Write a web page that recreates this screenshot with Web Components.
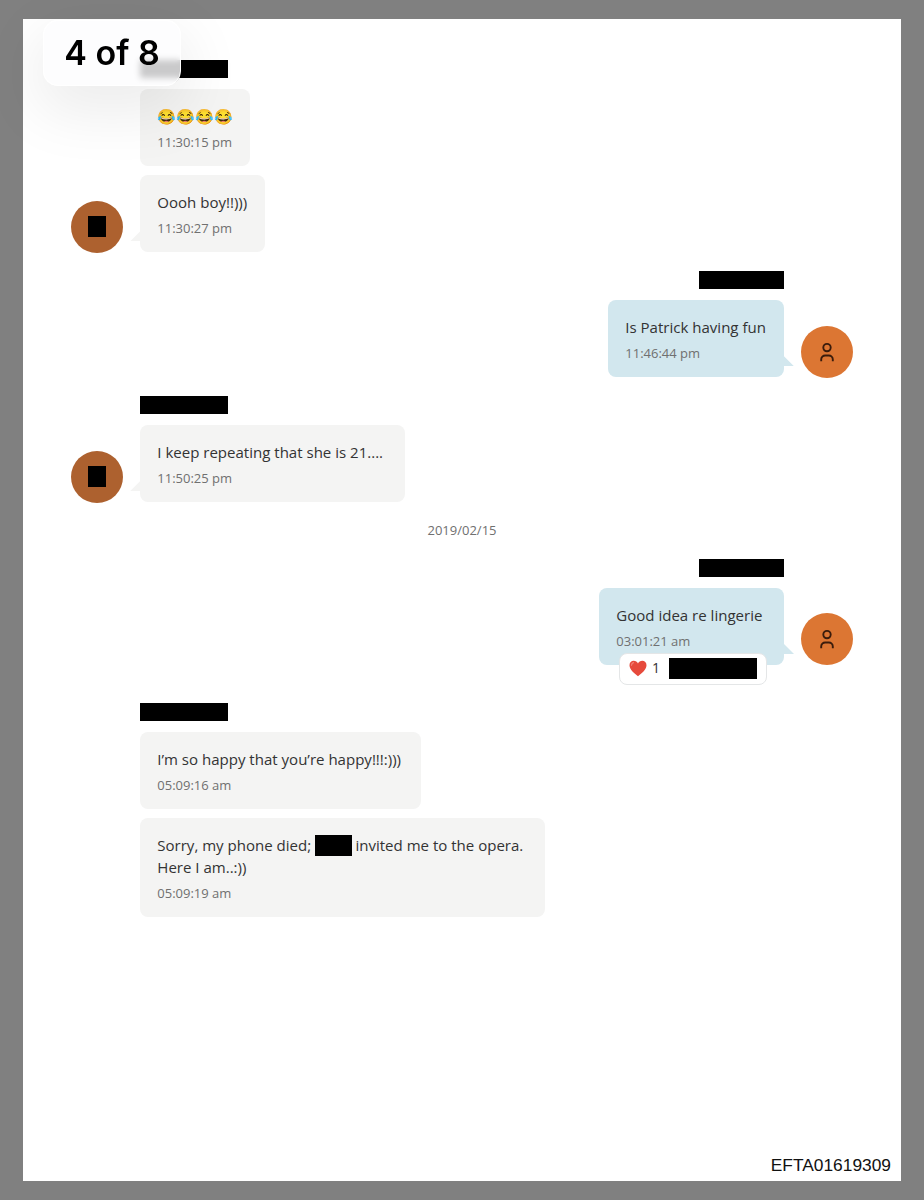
<!DOCTYPE html>
<html lang="en">
<head>
<meta charset="utf-8">
<title>Messages</title>
<style>
  body {
    margin: 0;
    background: #808080;
    font-family: "Open Sans", "Noto Sans", sans-serif;
  }
</style>
</head>
<body>
<document-page code="EFTA01619309">
  <page-counter slot="counter">4 of 8</page-counter>

  <message-group avatar="redacted">
    <redacted-box slot="name"></redacted-box>
    <chat-bubble time="11:30:15 pm" style="--width: 110px"><emoji-row>😂😂😂😂</emoji-row></chat-bubble>
    <chat-bubble time="11:30:27 pm" style="--width: 125px" tail>Oooh boy!!)))</chat-bubble>
  </message-group>

  <message-group side="right" avatar="person">
    <redacted-box slot="name" style="--w: 85px"></redacted-box>
    <chat-bubble side="right" time="11:46:44 pm" style="--width: 176px" tail>Is Patrick having fun</chat-bubble>
  </message-group>

  <message-group avatar="redacted">
    <redacted-box slot="name"></redacted-box>
    <chat-bubble time="11:50:25 pm" style="--width: 265px" tail>I keep repeating that she is 21....</chat-bubble>
  </message-group>

  <date-divider>2019/02/15</date-divider>

  <message-group side="right" avatar="person" style="margin-bottom: 38px">
    <redacted-box slot="name" style="--w: 85px"></redacted-box>
    <chat-bubble side="right" time="03:01:21 am" style="--width: 185px" tail>Good idea re lingerie
      <message-reaction slot="reaction" count="1"><redacted-box style="--w: 88px; --h: 21px"></redacted-box></message-reaction>
    </chat-bubble>
  </message-group>

  <message-group>
    <redacted-box slot="name"></redacted-box>
    <chat-bubble time="05:09:16 am" style="--width: 281px">I’m so happy that you’re happy!!!:)))</chat-bubble>
    <chat-bubble time="05:09:19 am" style="--width: 405px">Sorry, my phone died; <redacted-box style="--w: 36.5px; --h: 21px; vertical-align: -1px; margin: -4px 0"></redacted-box> invited me to the opera.<br>Here I am..:))</chat-bubble>
  </message-group>
</document-page>

<script>
const define = (name, html, setup) => {
  const template = document.createElement("template")
  template.innerHTML = html
  customElements.define(name, class extends HTMLElement {
    constructor() {
      super()
      this.attachShadow({ mode: "open" })
      this.shadowRoot.appendChild(template.content.cloneNode(true))
    }

    connectedCallback() {
      if (setup) setup(this, this.shadowRoot)
    }
  })
}

define("document-page", /* html */ `
  <style>
    :host {
      display: block;
      height: 1200px;
      padding: 19px 23px 19px;
      box-sizing: border-box;
      position: relative;
      overflow: hidden;
    }

    main {
      display: flex;
      flex-direction: column;
      height: 1162px;
      padding: 41px 48px 0;
      box-sizing: border-box;
      background: white;
    }

    footer {
      margin: auto -38px 6px 0;
      text-align: right;
      font: 17.35px/20px "Liberation Sans", Arial, sans-serif;
      color: #111;
    }
  </style>
  <main>
    <slot></slot>
    <footer></footer>
  </main>
  <slot name="counter"></slot>
`, (el, root) => {
  root.querySelector("footer").textContent = el.getAttribute("code")
})

define("page-counter", /* html */ `
  <style>
    :host {
      position: absolute;
      left: 43px;
      top: 20px;
      width: 138px;
      height: 66px;
      box-sizing: border-box;
      border: 1.5px solid #fff;
      border-radius: 15px;
      background: rgba(253, 253, 254, 0.8);
      backdrop-filter: blur(3px);
      box-shadow: 0 20px 60px 6px rgba(0, 0, 0, 0.08);
      display: flex;
      align-items: center;
      justify-content: center;
      font: 600 34px/1 Inter, sans-serif;
      color: #000;
    }
  </style>
  <span><slot></slot></span>
`)

define("redacted-box", /* html */ `
  <style>
    :host {
      display: inline-block;
      width: var(--w, 88px);
      height: var(--h, 18px);
      background: #000;
    }
  </style>
`)

define("emoji-row", /* html */ `
  <style>
    :host {
      display: block;
      height: 21.5px;
      font-size: 15px;
      white-space: nowrap;
    }
  </style>
  <slot></slot>
`)

define("user-avatar", /* html */ `
  <style>
    :host {
      display: flex;
      align-items: center;
      justify-content: center;
      width: 52px;
      height: 52px;
      border-radius: 50%;
      background: #ad612f;
    }

    :host([kind="person"]) {
      background: #dc7633;
    }

    svg {
      display: none;
      width: 16px;
      height: 20px;
      fill: none;
      stroke: #3a1c0c;
      stroke-width: 1.9;
    }

    :host([kind="person"]) svg {
      display: block;
    }

    :host([kind="person"]) redacted-box {
      display: none;
    }
  </style>
  <redacted-box style="--w: 18px; --h: 21px"></redacted-box>
  <svg viewBox="0 0 16 20">
    <circle cx="8" cy="5.6" r="3.7" />
    <path d="M2.2 19.2v-1.7a4 4 0 0 1 4-4h3.6a4 4 0 0 1 4 4v1.7" />
  </svg>
`)

define("message-group", /* html */ `
  <style>
    :host {
      display: grid;
      grid-template-columns: 52px auto;
      column-gap: 17px;
      justify-content: start;
      align-items: end;
      margin-bottom: 18.7px;
    }

    :host([side="right"]) {
      grid-template-columns: auto 52px;
      justify-content: end;
    }

    .body {
      display: flex;
      flex-direction: column;
      align-items: flex-start;
      gap: 9.1px;
      grid-row: 1;
      grid-column: 2;
    }

    :host([side="right"]) .body {
      grid-column: 1;
      align-items: flex-end;
    }

    .name {
      display: flex;
      margin-bottom: 1.9px;
    }

    user-avatar {
      grid-row: 1;
      grid-column: 1;
      margin-bottom: -0.4px;
    }

    :host([side="right"]) user-avatar {
      grid-column: 2;
    }

    :host(:not([avatar])) user-avatar {
      visibility: hidden;
    }
  </style>
  <user-avatar></user-avatar>
  <div class="body">
    <div class="name"><slot name="name"></slot></div>
    <slot></slot>
  </div>
`, (el, root) => {
  root.querySelector("user-avatar").setAttribute("kind", el.getAttribute("avatar") || "")
})

define("chat-bubble", /* html */ `
  <style>
    :host {
      --fill: #f4f4f3;
      display: block;
      position: relative;
      width: var(--width);
      padding: 17.1px 0 15.1px 17.3px;
      box-sizing: border-box;
      border-radius: 8px;
      background: var(--fill);
      color: #333;
    }

    :host([side="right"]) {
      --fill: #d2e7ee;
    }

    .text {
      font-size: 15.04px;
      line-height: 21.5px;
      white-space: nowrap;
    }

    time {
      display: block;
      margin-top: 5.3px;
      font-size: 13px;
      line-height: 18.2px;
      color: #707070;
    }

    .tail {
      display: none;
      position: absolute;
      left: -10px;
      bottom: 11px;
      width: 11px;
      height: 11px;
      background: var(--fill);
      clip-path: polygon(100% 0, 100% 100%, 0 100%);
    }

    :host([tail]) .tail {
      display: block;
    }

    :host([side="right"]) .tail {
      left: auto;
      right: -10px;
      clip-path: polygon(0 0, 100% 100%, 0 100%);
    }
  </style>
  <div class="text"><slot></slot></div>
  <time></time>
  <i class="tail"></i>
  <slot name="reaction"></slot>
`, (el, root) => {
  root.querySelector("time").textContent = el.getAttribute("time")
})

define("message-reaction", /* html */ `
  <style>
    :host {
      position: absolute;
      right: 17px;
      bottom: -19.5px;
      display: flex;
      align-items: center;
      width: 148px;
      height: 32px;
      padding: 0 9px 1px;
      box-sizing: border-box;
      border: 1px solid #e4e6e7;
      border-radius: 8px;
      background: white;
      font-size: 14px;
      line-height: 20px;
      color: #333;
    }

    svg {
      width: 18px;
      height: 17px;
      margin-right: 5px;
    }

    .who {
      display: flex;
      margin-left: auto;
    }
  </style>
  <svg viewBox="0 0 18 17">
    <path fill="#e64a3c" d="M9 16.3C5 13.3.5 9.6.5 5.3.5 2.5 2.4.8 4.7.8 6.6.8 8.2 1.9 9 3.5 9.8 1.9 11.4.8 13.3.8c2.3 0 4.2 1.7 4.2 4.5 0 4.3-4.5 8-8.5 11z" />
    <path fill="none" stroke="#f28378" stroke-width="1.2" stroke-linecap="round" d="M2.5 5.2q.2-2 2-2.5" />
  </svg>
  <span class="count"></span>
  <span class="who"><slot></slot></span>
`, (el, root) => {
  root.querySelector(".count").textContent = el.getAttribute("count")
})

define("date-divider", /* html */ `
  <style>
    :host {
      display: block;
      height: 38px;
      text-align: center;
      font-size: 13px;
      line-height: 18px;
      color: #707070;
    }
  </style>
  <slot></slot>
`)
</script>
</body>
</html>
